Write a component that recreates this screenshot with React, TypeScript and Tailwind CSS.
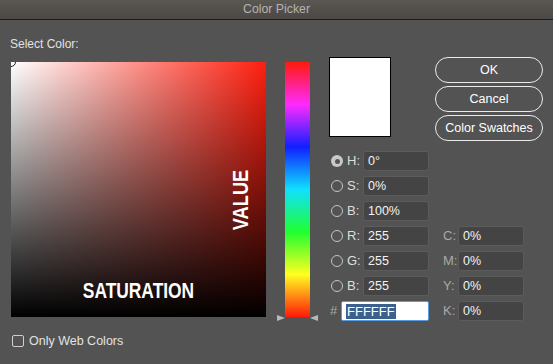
import React from "react";

const Radio = ({ on }: { on?: boolean }) =>
  on ? (
    <div className="w-[12px] h-[12px] rounded-full bg-[#c9c9c9] flex items-center justify-center">
      <div className="w-[5px] h-[5px] rounded-full bg-[#555555]" />
    </div>
  ) : (
    <div className="w-[12px] h-[12px] rounded-full border-[1.3px] border-[#c4c4c4]" />
  );

const Field = ({ v }: { v: string }) => (
  <div className="w-[66px] h-[20px] rounded-[3px] bg-[#444444] border border-[#5c5c5c] flex items-center pl-[4px] text-[12.5px] text-[#f2f2f2]">
    {v}
  </div>
);

type Row = { k: string; v: string; on?: boolean; c?: [string, string] };

const rows: Row[] = [
  { k: "H:", v: "0°", on: true },
  { k: "S:", v: "0%" },
  { k: "B:", v: "100%" },
  { k: "R:", v: "255", c: ["C:", "0%"] },
  { k: "G:", v: "255", c: ["M:", "0%"] },
  { k: "B:", v: "255", c: ["Y:", "0%"] },
];

export default function App() {
  return (
    <div className="w-[553px] h-[364px] bg-[#535353] overflow-hidden font-['Liberation_Sans',Arial,sans-serif] select-none">
      <div className="h-[20px] border-b border-[#1c1c1c] bg-linear-to-b from-[#5b5853] to-[#4b4845] flex items-center justify-center text-[12.3px] text-[#b6b3ae]">
        Color Picker
      </div>
      <div className="flex">
        {/* left column */}
        <div className="ml-[11px] w-[255px] pt-[17px]">
          <div className="h-[14px] leading-[14px] text-[12px] text-[#e2e2e2] -ml-[1px]">Select Color:</div>
          <div className="mt-[11px] relative w-[255px] h-[255px] overflow-hidden bg-[linear-gradient(to_right,#ffffff,#ff1f0f)]">
            <div className="absolute inset-0 bg-[linear-gradient(to_top,#000000,rgba(0,0,0,0))]" />
            <div className="absolute -left-[5px] -top-[5px] w-[10px] h-[10px] rounded-full border-[1.5px] border-[#1e1e1e]" />
            <div className="absolute left-0 right-0 top-[218px] flex justify-center">
              <span className="text-[22px] leading-none font-bold text-white whitespace-nowrap scale-x-[0.79]">SATURATION</span>
            </div>
            <div className="absolute left-[230px] top-[138px] w-0 h-0 flex items-center justify-center">
              <span className="text-[22px] leading-none font-bold text-white whitespace-nowrap -rotate-90 scale-x-[0.83]">VALUE</span>
            </div>
          </div>
          <div className="mt-[15px] flex items-center">
            <div className="ml-[1px] w-[12px] h-[12px] rounded-[2px] border border-[#cfcfcf]" />
            <span className="ml-[5px] text-[12.5px] text-[#e2e2e2]">Only Web Colors</span>
          </div>
        </div>

        {/* hue bar */}
        <div className="ml-[19px] pt-[42px]">
          <div className="relative w-[25px] h-[255px] bg-[linear-gradient(to_bottom,#ff1a0a,#ff2aff,#1020ff,#10e0ff,#20ff30,#ffff20,#ff1a0a)]">
            <div className="absolute -left-[8px] bottom-[-4px] w-0 h-0 border-y-[3.5px] border-y-transparent border-l-[8px] border-l-[#b8b8b8]" />
            <div className="absolute -right-[8px] bottom-[-4px] w-0 h-0 border-y-[3.5px] border-y-transparent border-r-[8px] border-r-[#b8b8b8]" />
          </div>
        </div>

        {/* right section */}
        <div className="ml-[19px] w-[214px] pt-[37px]">
          <div className="flex justify-between">
            <div className="w-[62px] h-[80px] bg-white border border-black" />
            <div className="w-[108px] flex flex-col gap-[3px]">
              {["OK", "Cancel", "Color Swatches"].map((b) => (
                <div
                  key={b}
                  className="h-[26px] rounded-full border-[1.5px] border-[#ececec] flex items-center justify-center text-[12.5px] text-white"
                >
                  {b}
                </div>
              ))}
            </div>
          </div>
          <div className="mt-[10px] flex flex-col gap-[5px]">
            {rows.map((r, i) => (
              <div key={i} className="h-[20px] flex items-center">
                <div className="w-[18px] pl-[2px]">
                  <Radio on={r.on} />
                </div>
                <div className="w-[16px] text-[13px] text-[#dedede]">{r.k}</div>
                <Field v={r.v} />
                {r.c && (
                  <>
                    <div className="ml-[14px] w-[15px] text-[13px] text-[#a9a9a9]">{r.c[0]}</div>
                    <Field v={r.c[1]} />
                  </>
                )}
              </div>
            ))}
            <div className="h-[20px] flex items-center">
              <div className="w-[12px] pl-[1px] text-[13px] text-[#a9a9a9]">#</div>
              <div className="w-[88px] h-[20px] bg-white border-[1.5px] border-[#5a9ae0] rounded-[2px] flex items-center pl-[4px]">
                <span className="bg-[#3d5f8c] text-white text-[13px] leading-[15px] px-[1px]">FFFFFF</span>
              </div>
              <div className="ml-[14px] w-[15px] text-[13px] text-[#a9a9a9]">K:</div>
              <Field v="0%" />
            </div>
          </div>
        </div>
      </div>
    </div>
  );
}
